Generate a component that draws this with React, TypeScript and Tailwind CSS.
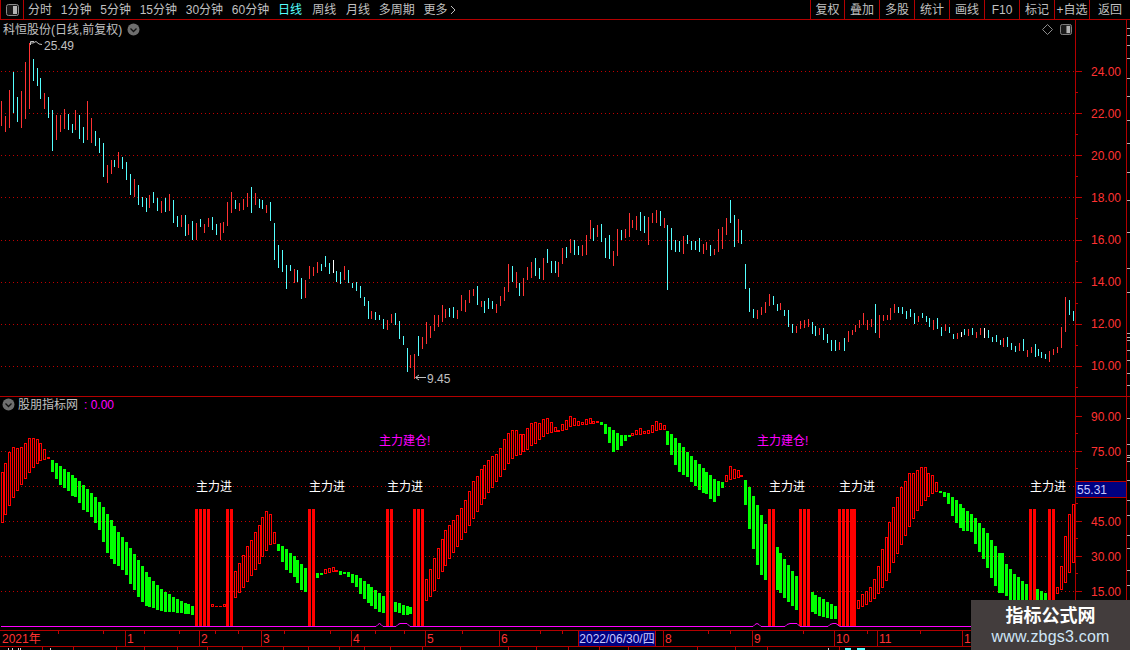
import React from "react";

const R = "#ff3232", C = "#55ffff", W = "#ffffff";
type P = [number, number, number, number];
const price: P[] = [
[1,101,126,0],[5,116,132,0],[9,90,128,0],[13,72,113,1],[17,97,122,1],[21,91,128,0],[25,62,119,0],[29,43,109,0],[33,59,81,1],[37,68,86,1],[40,78,99,1],[44,93,109,0],[48,97,118,1],[52,110,151,1],[56,115,140,0],[60,115,132,0],[64,109,129,0],[68,114,130,1],[72,124,133,1],[75,110,130,0],[79,115,139,1],[83,127,143,1],[87,101,140,0],[91,118,143,0],[95,131,146,1],[99,138,153,1],[103,143,177,1],[107,165,183,0],[111,160,174,0],[114,160,167,1],[118,152,168,0],[122,157,169,1],[126,162,180,1],[130,174,195,1],[134,179,197,0],[138,185,205,1],[142,197,207,1],[146,198,212,1],[149,195,208,0],[153,192,203,1],[157,198,211,1],[161,201,213,0],[165,198,212,1],[169,194,211,0],[173,200,223,1],[177,216,227,1],[181,215,227,0],[185,215,236,1],[188,224,235,0],[192,221,240,1],[196,223,240,0],[200,219,227,1],[204,224,233,0],[208,218,227,0],[212,217,230,1],[216,224,235,1],[220,223,240,0],[223,222,233,0],[227,202,226,0],[231,192,213,0],[235,200,209,1],[239,203,211,0],[243,199,210,0],[247,193,207,0],[251,187,213,1],[255,193,205,0],[259,199,208,1],[262,200,209,1],[266,205,213,0],[270,202,221,1],[274,223,260,1],[278,245,268,1],
[282,250,272,1],[286,265,289,1],[290,265,271,1],[294,269,283,0],[297,270,282,1],[301,278,299,1],[305,280,298,0],[309,266,279,0],[313,267,276,0],[317,262,273,0],[321,264,271,1],[325,256,267,1],[329,263,274,1],[333,260,273,2],[336,271,282,1],[340,272,284,1],[344,266,280,0],[348,270,283,1],[352,283,288,1],[356,282,291,1],[360,286,298,1],[364,297,306,1],[368,301,319,1],[371,311,319,0],[375,312,320,1],[379,315,320,1],[383,319,329,1],[387,320,330,0],[391,314,323,0],[395,313,325,1],[399,321,339,1],[403,336,345,1],[407,348,372,1],[410,355,368,0],[414,354,379,0],[418,336,356,1],[422,337,349,0],[426,322,344,0],[430,326,338,0],[434,315,331,0],[438,315,327,0],[442,305,322,0],[445,309,318,0],[449,308,317,1],[453,307,318,1],[457,310,319,0],[461,295,311,0],[465,300,312,0],[469,290,303,0],[473,289,296,0],[477,286,305,1],[481,301,307,0],[484,301,313,1],[488,298,309,1],[492,301,309,1],[496,304,313,0],[500,296,306,0],[504,287,301,0],[508,264,292,0],[512,266,282,1],[516,272,288,0],[519,283,296,1],[523,278,296,0],[527,267,280,0],[531,262,278,0],[535,258,276,1],[539,268,279,1],[543,258,280,0],[547,249,263,1],[551,261,273,1],[555,261,273,1],[558,262,277,0],
[562,248,264,0],[566,247,258,1],[570,239,253,0],[574,240,255,1],[578,246,255,1],[582,245,256,0],[586,235,255,0],[590,220,239,0],[593,228,241,1],[597,225,237,0],[601,224,242,1],[605,238,258,1],[609,235,259,1],[613,251,266,0],[617,229,256,0],[621,230,240,1],[625,229,238,0],[629,213,237,0],[632,220,228,0],[636,216,230,0],[640,212,231,1],[644,216,233,1],[648,217,245,0],[652,213,223,0],[656,210,223,0],[660,211,226,1],[664,218,228,0],[667,225,290,1],[671,228,250,1],[675,240,252,1],[679,241,252,1],[683,236,254,0],[687,235,244,1],[691,241,250,1],[695,241,250,1],[699,238,252,1],[703,244,254,0],[706,242,250,0],[710,245,256,1],[714,249,255,0],[718,229,252,0],[722,227,249,0],[726,218,235,0],[730,200,223,1],[734,215,247,1],[738,219,243,0],[741,230,244,1],[745,264,289,1],[749,288,312,1],[753,309,318,1],[757,310,319,0],[761,307,315,0],[765,302,313,0],[769,294,306,0],[773,296,305,1],[777,304,311,1],[780,303,310,0],[784,310,316,1],[788,310,327,1],[792,324,333,1],[796,326,333,0],[800,321,329,0],[804,320,328,0],[808,319,327,0],[812,322,334,1],[815,326,336,1],[819,328,335,0],[823,328,340,1],[827,334,343,1],[831,340,351,1],[835,340,351,1],[839,342,350,0],
[844,338,351,1],[848,331,342,0],[852,330,335,0],[855,325,332,0],[859,320,328,0],[863,313,325,0],[867,320,330,0],[871,319,327,0],[875,304,333,1],[879,315,338,0],[883,315,321,0],[887,315,320,0],[890,308,320,0],[894,304,313,0],[898,307,313,1],[902,307,314,1],[906,311,319,1],[910,309,317,1],[914,313,324,1],[918,316,322,0],[922,313,318,1],[926,316,322,1],[929,318,327,1],[933,320,330,0],[937,318,329,1],[941,327,336,1],[945,324,331,0],[949,327,333,1],[953,334,339,1],[957,333,339,0],[961,332,337,2],[964,329,335,1],[968,329,336,0],[972,328,335,1],[976,332,338,0],[980,328,335,0],[984,328,338,2],[988,330,338,1],[992,337,342,1],[996,335,342,1],[1000,340,345,1],[1003,338,347,0],[1007,337,347,1],[1011,343,350,1],[1015,346,352,1],[1019,343,351,0],[1023,339,351,1],[1027,350,357,0],[1031,347,353,0],[1035,344,357,1],[1038,349,356,1],[1041,352,358,1],[1045,354,359,1],[1049,351,362,0],[1053,349,355,0],[1057,347,353,0],[1061,327,348,0],[1065,297,332,0],[1069,300,315,1],[1073,311,321,1],
];

type B = [number, number, number];
const hollow: B[] = [
[1,472,523],[4,463,515],[8,452,506],[12,447,498],[16,448,491],[20,447,485],[24,443,479],[28,438,473],[32,438,468],[36,439,464],[39,443,461],[43,449,460],
[211,604,607],[223,604,607],
[234,571,598],[238,563,593],[242,555,588],[246,546,582],[250,540,576],[254,532,570],[258,525,564],[261,517,557],[265,511,551],[269,514,545],[273,532,544],
[324,569,574],[328,568,573],[332,567,572],
[425,579,601],[429,569,597],[433,558,591],[437,548,579],[441,539,572],[444,530,566],[448,525,559],[452,520,553],[456,515,547],[460,508,540],[464,500,533],[468,491,526],[472,481,519],[476,476,512],[480,469,505],[483,465,499],[487,460,493],[491,456,488],[495,454,482],[499,448,477],[503,439,470],[507,433,464],[511,430,459],[515,430,456],[519,434,455],[522,434,452],[526,428,450],[530,423,446],[534,422,444],[538,423,440],[542,419,437],[546,418,434],[550,422,433],[554,427,432],[561,424,431],[565,420,430],[569,416,427],[573,418,426],[577,421,426],[581,422,425],[585,419,425],[589,418,424],[592,421,424],
[631,433,436],[635,430,435],[639,428,435],[643,431,434],[647,430,434],[651,425,433],[655,421,431],[659,423,430],[663,425,430],
[725,475,482],[729,466,480],[733,469,479],[737,470,478],
[857,600,609],[861,594,607],[865,591,605],[869,587,602],[873,579,599],[877,566,594],[881,549,588],[885,537,581],[888,522,573],[892,507,563],[896,497,554],[900,487,545],[904,481,536],[908,473,527],[912,473,519],[916,470,511],[920,467,506],[924,467,501],[927,473,497],[931,475,494],[935,482,492],
[1056,587,594],[1060,566,590],[1064,536,583],[1068,514,573],[1072,504,563],
];
const green: B[] = [
[51,460,472],[55,463,479],[59,466,485],[63,469,488],[67,472,491],[71,475,496],[74,478,497],[78,481,503],[82,485,510],[86,489,512],[90,493,517],[94,497,523],[98,502,530],[102,507,542],[106,514,553],[110,520,559],[113,526,564],[117,532,566],[121,537,570],[125,542,575],[129,548,584],[133,554,590],[137,560,597],[141,566,602],[145,572,606],[148,577,607],[152,581,608],[156,585,610],[160,589,611],[164,592,612],[168,594,612],[172,597,612],[176,599,613],[180,601,613],[184,603,614],[187,604,614],[191,606,615],
[277,544,551],[281,546,562],[285,549,570],[289,553,573],[293,556,577],[296,560,583],[300,564,590],[304,568,592],[316,573,578],[320,573,575],
[339,571,575],[343,572,574],[347,572,577],[351,574,583],[355,575,587],[359,578,594],[363,581,599],[367,584,603],[370,587,606],[374,590,609],[378,593,612],[382,596,613],[394,602,612],[398,603,613],[402,605,615],[406,606,615],[409,607,614],
[600,422,425],[604,424,434],[608,427,443],[612,430,452],[616,433,450],[620,435,446],[624,435,441],[628,435,437],
[666,431,445],[670,434,455],[674,438,465],[678,443,472],[682,447,475],[686,452,477],[690,456,482],[694,460,486],[698,464,490],[702,468,493],[705,472,494],[709,475,499],[713,479,502],[717,481,496],[721,482,488],
[744,480,505],[748,487,529],[752,496,549],[756,505,565],[760,515,575],[764,524,580],[776,547,590],[779,553,593],[783,559,598],[787,565,602],[791,571,606],[795,576,610],
[811,592,612],[814,595,614],[818,597,616],[822,599,617],[826,602,618],[830,604,619],[834,606,619],
[939,491,493],[943,492,497],[947,493,504],[951,497,516],[955,500,523],[959,504,528],[962,508,531],[966,511,531],[970,514,532],[974,518,544],[978,523,552],[982,528,559],[986,533,568],[990,540,578],[994,546,586],[998,553,593],[1001,553,593],[1005,564,596],[1009,569,606],[1013,574,608],[1017,577,610],[1021,581,612],[1025,584,614],[1036,589,613],[1040,591,615],[1044,593,617],
];
const thin: B[] = [[47,457,459],[215,606,607],[219,606,607],[335,570,572],[557,430,432],[596,421,423],[740,475,477]];
const tall = [195,199,203,207,226,230,308,312,386,390,413,417,421,768,772,799,803,807,838,842,846,850,853,1029,1033,1048,1052];

const leftTabs: [string, string][] = [["分时",""],["1分钟",""],["5分钟",""],["15分钟",""],["30分钟",""],["60分钟",""],["日线","text-[#55ffff]"],["周线","ml-[1.5px]"],["月线","ml-[1px]"],["多周期",""]];
const rightBtns: [string, string][] = [["复权","w-[34px]"],["叠加","w-[35px]"],["多股","w-[35px]"],["统计","w-[35px]"],["画线","w-[35px]"],["F10","w-[35px]"],["标记","w-[35px]"],["+自选","w-[35px]"],["返回","flex-1"]];
const dates: [string, string][] = [["2021年","w-[125px]"],["1","w-[74px]"],["2","w-[62px]"],["3","w-[90px]"],["4","w-[74px]"],["5","w-[74px]"],["6","w-[79px]"]];
const dates2: [string, string][] = [["8","w-[89px]"],["9","w-[82px]"],["10","w-[43px]"],["11","w-[85px]"],["1","flex-1"]];

function ChevronCircle() {
  return (
    <svg width="13" height="13" viewBox="0 0 13 13" className="shrink-0">
      <circle cx="6.5" cy="6.5" r="6" fill="#6e6e6e" />
      <path d="M3.5 5.5 L6.5 8.5 L9.5 5.5" fill="none" stroke="#111" strokeWidth="1.3" />
    </svg>
  );
}

function PanelIcon({ w = 13, h = 12 }: { w?: number; h?: number }) {
  return (
    <svg width={w} height={h} viewBox="0 0 13 12">
      <rect x="0.5" y="0.5" width="12" height="11" rx="2" fill="#1a1a1a" stroke="#8c8c8c" />
      <rect x="7" y="2" width="4" height="8" fill="#b4b4b4" />
    </svg>
  );
}

function Grid({ ys }: { ys: number[] }) {
  return (
    <>
      {ys.map((y) => (
        <line key={y} x1="1" x2="1075" y1={y + 0.5} y2={y + 0.5} stroke="#c00000" strokeDasharray="1 3" />
      ))}
    </>
  );
}

function AxisTicks({ major, minor, top }: { major: number[]; minor: number[]; top: number }) {
  return (
    <svg className="absolute inset-0 w-full h-full" shapeRendering="crispEdges">
      {major.map((y) => <rect key={y} x="0" y={y - top} width="6" height="1" fill="#c00000" />)}
      {minor.map((y) => <rect key={y} x="0" y={y - top} width="2" height="1" fill="#c00000" />)}
    </svg>
  );
}

function Strip({ ticks, top }: { ticks: number[]; top: number }) {
  return (
    <div className="relative flex-1 border-l border-[#b30000]">
      <svg className="absolute inset-0 w-full h-full" shapeRendering="crispEdges">
        {ticks.map((y) => <rect key={y} x="0" y={y - top} width="4" height="1" fill="#b0b0b0" />)}
      </svg>
    </div>
  );
}

export default function App() {
  return (
    <div className="w-[1130px] h-[650px] bg-black overflow-hidden relative flex flex-col text-[12px] leading-none text-[#c0c0c0] font-['Liberation_Sans','Noto_Sans_CJK_SC',sans-serif]">
      {/* toolbar */}
      <div className="h-[20px] shrink-0 flex items-center border-b border-[#b30000]">
        <div className="w-[24px] h-full flex items-center justify-center border-x border-[#b30000]">
          <PanelIcon />
        </div>
        <div className="flex items-center gap-[8.75px] pl-[4px]">
          {leftTabs.map(([t, c]) => (
            <span key={t} className={c}>{t}</span>
          ))}
          <span className="flex items-center gap-[2px]">
            更多
            <svg width="6" height="10" viewBox="0 0 6 10"><path d="M1 1 L5 5 L1 9" fill="none" stroke="#c0c0c0" /></svg>
          </span>
        </div>
        <div className="ml-auto w-[320px] h-full flex">
          {rightBtns.map(([t, w]) => (
            <div key={t} className={`${w} h-full flex items-center justify-center border-l border-[#b30000]`}>{t}</div>
          ))}
        </div>
      </div>

      {/* price panel */}
      <div className="h-[377px] shrink-0 flex border-b border-[#b30000]">
        <div className="relative w-[1075px]">
          <svg width="1075" height="376" viewBox="0 20 1075 376" className="block" shapeRendering="crispEdges">
            <Grid ys={[71, 113, 155, 197, 240, 282, 324, 366]} />
            {price.map(([x, t, b, c]) => (
              <rect key={x} x={x} y={t} width="1" height={b - t} fill={c === 0 ? R : c === 1 ? C : W} />
            ))}
            <g shapeRendering="auto" fill="none" stroke="#c0c0c0">
              <path d="M30.5 45 V41.5 H34 M30.5 43 H33 L36 41.5 L39 44 L42 44.5" />
              <path d="M426 377.5 H416 M419 375 L415.5 377.5 L419 380" />
            </g>
          </svg>
          <div className="absolute left-[3px] top-[3px] flex items-center gap-[5px]">
            <span>科恒股份(日线,前复权)</span>
            <ChevronCircle />
          </div>
          <span className="absolute left-[44px] top-[20px]">25.49</span>
          <span className="absolute left-[427px] top-[353px]">9.45</span>
          <div className="absolute left-[1042px] top-[4px] flex items-center gap-[7px]">
            <svg width="11" height="11" viewBox="0 0 11 11"><path d="M5.5 .5 L10.5 5.5 L5.5 10.5 L.5 5.5 Z" fill="none" stroke="#8c8c8c" /></svg>
            <PanelIcon w={12} h={11} />
          </div>
        </div>
        <div className="relative w-[51px] border-l border-[#b30000] flex flex-col items-end pr-[5px] pt-[31px] text-[#ff3232]">
          <AxisTicks top={20} major={[71, 113, 155, 197, 240, 282, 324, 366]} minor={[92, 134, 176, 218, 261, 303, 345, 387]} />
          {["24.00","22.00","20.00","18.00","16.00","14.00","12.00","10.00"].map((l) => (
            <div key={l} className="h-[42px] flex items-center">{l}</div>
          ))}
        </div>
        <Strip top={20} ticks={[28, 35, 45, 58, 78, 96, 120, 143, 172, 200, 232, 268, 292, 333, 337, 340, 350, 360, 373, 385]} />
      </div>

      {/* indicator panel */}
      <div className="h-[233px] shrink-0 flex">
        <div className="relative w-[1075px]">
          <svg width="1075" height="233" viewBox="0 397 1075 233" className="block" shapeRendering="crispEdges">
            <Grid ys={[451, 486, 521, 556, 591]} />
            {green.map(([x, t, b]) => <rect key={x} x={x} y={t} width="3" height={b - t} fill="#00ff00" />)}
            {hollow.map(([x, t, b]) => <rect key={x} x={x + 0.5} y={t + 0.5} width="2" height={b - t - 1} fill="#000" stroke="#ff0000" />)}
            {thin.map(([x, t, b]) => <rect key={x} x={x} y={t} width="3" height={b - t} fill="#ff0000" />)}
            {tall.map((x) => <rect key={x} x={x} y="509" width="3" height="117" fill="#ff0000" />)}
            <path
              d="M1 626.5 H376 L378 624.5 L379.5 623.5 L381 624.5 L383 626.5 H396 L398 624.5 L400 623.5 H407 L410 626.5 H753 L755 624.5 L757 623.5 L759 624.5 L761 626.5 H785 L787 624.5 L790 623.5 H797 L800 626.5 H828 L830 624.5 L833 623.5 H836 L840 626.5 H1075"
              fill="none"
              stroke="#ff00ff"
              shapeRendering="auto"
            />
          </svg>
          <div className="absolute left-[2px] top-[1px] flex items-center gap-[3px]">
            <ChevronCircle />
            <span>股朋指标网</span>
            <span className="ml-[3px] text-[#ff00ff]">: 0.00</span>
          </div>
          {[196, 309, 387, 769, 839, 1030].map((x) => (
            <span key={x} style={{ left: x }} className="absolute top-[84px] text-white">主力进</span>
          ))}
          {[379, 757].map((x) => (
            <span key={x} style={{ left: x }} className="absolute top-[38px] text-[#ff00ff]">主力建仓!</span>
          ))}
        </div>
        <div className="relative w-[51px] border-l border-[#b30000] flex flex-col items-end pr-[5px] pt-[2px] text-[#ff3232]">
          <AxisTicks top={397} major={[416, 451, 486, 521, 556, 591]} minor={[433, 468, 503, 538, 573, 608]} />
          {["90.00","75.00","","45.00","30.00","15.00"].map((l, i) => (
            <div key={i} className="h-[35px] flex items-center">{l}</div>
          ))}
          <div className="absolute left-0 right-0 top-[84px] h-[17px] bg-[#000080] border-y border-[#b30000] flex items-center pl-[1px] text-[#c8c8ff]">55.31</div>
        </div>
        <Strip top={397} ticks={[418, 444, 455, 457, 461, 480, 500, 515, 535, 548, 570, 585, 602, 622]} />
      </div>

      {/* date axis */}
      <div className="h-[17px] shrink-0 relative flex border-y border-[#b30000] text-[#ff3232]">
        <svg className="absolute inset-0 w-full h-full" shapeRendering="crispEdges">
          {[58, 103, 144, 179, 215, 238, 284, 330, 375, 404, 462, 540, 562, 708, 730, 803, 867, 920].map((x) => (
            <rect key={x} x={x} y="0" width="1" height="3" fill="#c00000" />
          ))}
        </svg>
        {dates.map(([t, w], i) => (
          <div key={i} className={`${w} h-full flex items-center ${i ? "pl-[1px] border-l border-[#b30000]" : "pl-[2px]"}`}>{t}</div>
        ))}
        <div className="w-[78px] h-full flex items-center justify-center bg-[#000080] text-[#c8c8ff] border-x border-[#b30000] whitespace-nowrap">2022/06/30/四</div>
        <div className="w-[7px] h-full" />
        {dates2.map(([t, w], i) => (
          <div key={i} className={`${w} h-full flex items-center pl-[1px] border-l border-[#b30000]`}>{t}</div>
        ))}
      </div>

      {/* bottom strip */}
      <div className="flex-1 relative">
        <svg className="absolute inset-0 w-full h-full" shapeRendering="crispEdges">
          {[42, 73, 116, 144, 177, 207, 242, 283, 308, 339, 364, 390, 422, 460, 508, 536, 568, 599, 628, 697, 735, 767, 839].map((x) => (
            <rect key={x} x={x} y="0" width="1" height="4" fill="#c00000" />
          ))}
          {[8, 12, 18, 20, 50, 828].map((x) => <rect key={x} x={x} y="1" width="1" height="2" fill="#d0d0d0" />)}
          <rect x="845" y="1" width="6" height="2" fill="#55ffff" />
          <rect x="857" y="1" width="8" height="2" fill="#55ffff" />
        </svg>
      </div>

      {/* watermark */}
      <div className="absolute right-0 bottom-0 w-[159px] h-[50px] bg-[#433d3d] flex flex-col items-center pt-[7px] gap-[4px]">
        <span className="text-[18px] font-bold text-white">指标公式网</span>
        <span className="text-[16px] tracking-[0.2px] text-[#cfe6f7] font-['Liberation_Sans',sans-serif]">www.zbgs3.com</span>
      </div>
    </div>
  );
}
